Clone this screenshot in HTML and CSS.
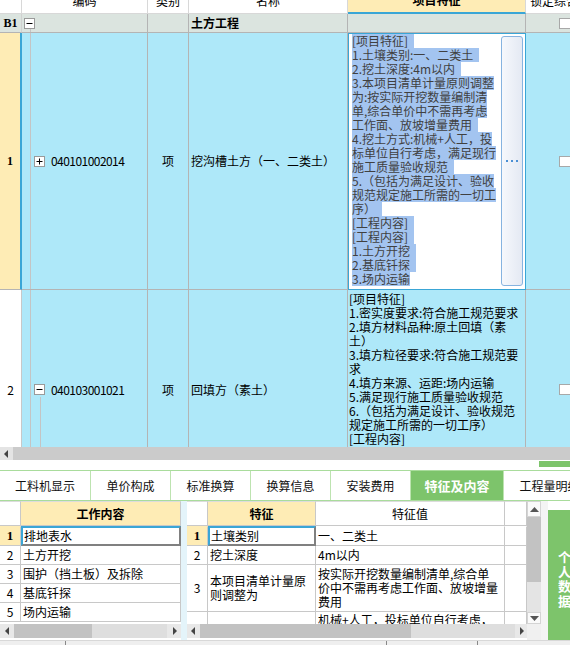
FILE: index.html
```html
<!DOCTYPE html>
<html lang="zh">
<head>
<meta charset="utf-8">
<link rel="stylesheet" href="styles.css">
</head>
<body>
<div class="top">
  <div class="tg">
    <div class="c h"></div>
    <div class="c h">编码</div>
    <div class="c h">类别</div>
    <div class="c h">名称</div>
    <div class="c h feat">项目特征</div>
    <div class="c h lock">锁定综合</div>

    <div class="c b1 num">B1</div>
    <div class="c b1 code b1code"><svg class="tbox" width="11" height="11" viewBox="0 0 11 11"><rect x="0.5" y="0.5" width="10" height="10" fill="#fff" stroke="#9a9a9a"/><path d="M2.5 5.5h6" stroke="#000"/></svg></div>
    <div class="c b1"></div>
    <div class="c b1 name bold">土方工程</div>
    <div class="c b1"></div>
    <div class="c b1 chk"><span class="box"></span></div>

    <div class="c r1 num sel">1</div>
    <div class="c r1 code r1code"><svg class="tbox" width="11" height="11" viewBox="0 0 11 11"><rect x="0.5" y="0.5" width="10" height="10" fill="#fff" stroke="#9a9a9a"/><path d="M2.5 5.5h6M5.5 2.5v6" stroke="#000"/></svg><span class="cd">040101002014</span></div>
    <div class="c r1 type">项</div>
    <div class="c r1 name">挖沟槽土方（一、二类土）</div>
    <div class="c edit">
      <div class="txt">
        <div class="ln nl">[项目特征]</div>
        <div class="ln nl">1.土壤类别:一、二类土</div>
        <div class="ln nl">2.挖土深度:4m以内</div>
        <div class="ln">3.本项目清单计量原则调整</div>
        <div class="ln">为:按实际开挖数量编制清</div>
        <div class="ln">单,综合单价中不需再考虑</div>
        <div class="ln nl">工作面、放坡增量费用</div>
        <div class="ln">4.挖土方式:机械+人工，投</div>
        <div class="ln">标单位自行考虑，满足现行</div>
        <div class="ln nl">施工质量验收规范</div>
        <div class="ln">5.（包括为满足设计、验收</div>
        <div class="ln">规范规定施工所需的一切工</div>
        <div class="ln nl">序）</div>
        <div class="ln nl">[工程内容]</div>
        <div class="ln nl">[工程内容]</div>
        <div class="ln nl">1.土方开挖</div>
        <div class="ln nl">2.基底钎探</div>
        <div class="ln">3.场内运输</div>
      </div>
      <div class="more"><svg width="12" height="3" viewBox="0 0 12 3"><rect x="0" y="0" width="2" height="2" fill="#4a8fd4"/><rect x="5" y="0" width="2" height="2" fill="#4a8fd4"/><rect x="10" y="0" width="2" height="2" fill="#4a8fd4"/></svg></div>
    </div>
    <div class="c r1 chk"><span class="box"></span></div>

    <div class="c r2 num">2</div>
    <div class="c r2 code r2code"><svg class="tbox" width="11" height="11" viewBox="0 0 11 11"><rect x="0.5" y="0.5" width="10" height="10" fill="#fff" stroke="#9a9a9a"/><path d="M2.5 5.5h6" stroke="#000"/></svg><span class="cd">040103001021</span></div>
    <div class="c r2 type">项</div>
    <div class="c r2 name">回填方（素土）</div>
    <div class="c r2 feat2">
      <div class="txt2">
        <div>[项目特征]</div>
        <div>1.密实度要求:符合施工规范要求</div>
        <div>2.填方材料品种:原土回填（素</div>
        <div>土）</div>
        <div>3.填方粒径要求:符合施工规范要</div>
        <div>求</div>
        <div>4.填方来源、运距:场内运输</div>
        <div>5.满足现行施工质量验收规范</div>
        <div>6.（包括为满足设计、验收规范</div>
        <div>规定施工所需的一切工序）</div>
        <div>[工程内容]</div>
        <div>1.土方开挖</div>
      </div>
    </div>
    <div class="c r2 chk"><span class="box"></span></div>
  </div>
</div>

<div class="hs">
  <div class="hbtn"><svg width="5" height="8" viewBox="0 0 5 8"><path d="M4 0v8L0 4z" fill="#444"/></svg></div>
</div>

<div class="gap"><i></i></div>

<div class="tabs">
  <div class="tab w91">工料机显示</div>
  <div class="tab w80">单价构成</div>
  <div class="tab w80">标准换算</div>
  <div class="tab w80">换算信息</div>
  <div class="tab w80">安装费用</div>
  <div class="tab w93 on">特征及内容</div>
  <div class="tab w92">工程量明细</div>
</div>

<div class="bot">
  <div class="panel pl">
    <div class="prow ph lgrid">
      <div class="pc"></div>
      <div class="pc yh">工作内容</div>
    </div>
    <div class="rows">
      <div class="prow lgrid first">
        <div class="pc pn yl">1</div>
        <div class="pc pt selc">排地表水</div>
      </div>
      <div class="prow lgrid">
        <div class="pc pn">2</div>
        <div class="pc pt">土方开挖</div>
      </div>
      <div class="prow lgrid">
        <div class="pc pn">3</div>
        <div class="pc pt">围护（挡土板）及拆除</div>
      </div>
      <div class="prow lgrid">
        <div class="pc pn">4</div>
        <div class="pc pt">基底钎探</div>
      </div>
      <div class="prow lgrid">
        <div class="pc pn">5</div>
        <div class="pc pt">场内运输</div>
      </div>
    </div>
    <div class="sb">
      <div class="sbtn"><svg width="5" height="8" viewBox="0 0 5 8"><path d="M4 0v8L0 4z" fill="#444"/></svg></div>
      <div class="thumb tl"></div>
      <div class="track"></div>
      <div class="sbtn"><svg width="5" height="8" viewBox="0 0 5 8"><path d="M1 0v8l4-4z" fill="#444"/></svg></div>
    </div>
  </div>

  <div class="divider"></div>

  <div class="panel pr">
    <div class="prow ph rgrid">
      <div class="pc"></div>
      <div class="pc yh">特征</div>
      <div class="pc wh">特征值</div>
      <div class="pc"></div>
    </div>
    <div class="rows">
      <div class="prow rgrid first">
        <div class="pc pn yl">1</div>
        <div class="pc pt selc">土壤类别</div>
        <div class="pc pt">一、二类土</div>
        <div class="pc"></div>
      </div>
      <div class="prow rgrid">
        <div class="pc pn">2</div>
        <div class="pc pt">挖土深度</div>
        <div class="pc pt">4m以内</div>
        <div class="pc"></div>
      </div>
      <div class="prow rgrid tall">
        <div class="pc pn">3</div>
        <div class="pc pt ml">本项目清单计量原<br>则调整为</div>
        <div class="pc pt ml">按实际开挖数量编制清单,综合单<br>价中不需再考虑工作面、放坡增量<br>费用</div>
        <div class="pc"></div>
      </div>
      <div class="prow rgrid tall">
        <div class="pc pn">4</div>
        <div class="pc pt ml">挖土方式</div>
        <div class="pc pt ml top">机械+人工，投标单位自行考虑，<br>满足现行施工质量验收规范</div>
        <div class="pc"></div>
      </div>
    </div>
    <div class="sb">
      <div class="sbtn n13"><svg width="5" height="8" viewBox="0 0 5 8"><path d="M4 0v8L0 4z" fill="#444"/></svg></div>
      <div class="thumb tr"></div>
      <div class="track"></div>
      <div class="sbtn n12"><svg width="5" height="8" viewBox="0 0 5 8"><path d="M1 0v8l4-4z" fill="#444"/></svg></div>
    </div>
  </div>

  <div class="vcol">
    <div class="vs">
      <div class="vbtn up"><svg width="9" height="5" viewBox="0 0 9 5"><path d="M0 5h9L4.5 0z" fill="#555"/></svg></div>
      <div class="vthumb"></div>
      <div class="vtrack"></div>
      <div class="vbtn dn"><svg width="9" height="5" viewBox="0 0 9 5"><path d="M0 0h9L4.5 5z" fill="#555"/></svg></div>
    </div>
  </div>

  <div class="spacer"></div>

  <div class="green"><span class="vt">个人数据</span></div>
</div>

<div class="status">
  <span class="tick t1"></span><span class="tick t2"></span><span class="tick t3"></span>
</div>
</body>
</html>
```

FILE: styles.css
```css
html, body {
  margin: 0;
  padding: 0;
}
body {
  width: 570px;
  height: 645px;
  overflow: hidden;
  background: #fff;
  color: #000;
  font-family: "Noto Sans CJK SC", "Liberation Sans", sans-serif;
  font-size: 12px;
}

/* ---------- top grid ---------- */
.top {
  height: 447px;
  overflow: hidden;
}
.tg {
  display: grid;
  grid-template-columns: 22px 126px 41px 159px 178px 80px;
  grid-template-rows: 26px 19px 257px 200px;
  margin-top: -12px;
  width: 606px;
}
.c {
  box-sizing: border-box;
  border-right: 1px solid #b4b4b4;
  border-bottom: 1px solid #b4b4b4;
  display: flex;
  align-items: center;
  overflow: hidden;
  white-space: nowrap;
  line-height: 14px;
}
.h {
  background: #fff;
  border-color: #d8d8d8;
  justify-content: center;
}
.h.feat {
  background: #feecb5;
  font-weight: bold;
  border-bottom: 2px solid #3aa6d6;
}
.h.lock {
  justify-content: flex-start;
  padding-left: 4px;
}
.b1 {
  background: #dbe4df;
}
.num {
  justify-content: center;
  font-family: "Liberation Serif", serif;
  font-weight: bold;
  font-size: 12px;
}
.b1.num {
  border-right-color: #d0d0d0;
}
.bold {
  font-weight: bold;
}
.name {
  padding-left: 2px;
}
.type {
  justify-content: center;
}
.code .tbox {
  flex: none;
  display: block;
}
.b1code {
  padding-left: 2px;
  background-image: linear-gradient(#c4c4c4, #c4c4c4);
  background-repeat: no-repeat;
  background-position: 8px 15px;
  background-size: 1px 100%;
}
.r1, .r2 {
  background-color: #aee8f9;
}
.r1.num.sel {
  background: #feecb5;
  border-right: 2px solid #3aa6d6;
}
.r2.num {
  background: #fff;
  font-family: "Noto Sans CJK SC", sans-serif;
  font-weight: normal;
  border-right-color: #c8c8c8;
}
.r1code {
  padding-left: 12px;
  background-image: linear-gradient(#c4c4c4, #c4c4c4);
  background-repeat: no-repeat;
  background-position: 8px 0;
  background-size: 1px 100%;
}
.r2code {
  padding-left: 12px;
  background-image: linear-gradient(#c4c4c4, #c4c4c4), linear-gradient(#c4c4c4, #c4c4c4);
  background-repeat: no-repeat, no-repeat;
  background-position: 8px 0, 18px 107px;
  background-size: 1px 100%, 1px 100%;
}
.cd {
  margin-left: 6px;
  letter-spacing: -0.55px;
}
.chk {
  padding-left: 33px;
  border-right: none;
}
.b1.chk {
  align-items: flex-start;
  padding-top: 4px;
}
.box {
  display: block;
  width: 14px;
  height: 11px;
  box-sizing: border-box;
  background: #fff;
  border: 1px solid #a8a8a8;
  flex: none;
}

/* editing cell */
.edit {
  background: #fff;
  border: 1px solid #3aa6d6;
  align-items: stretch;
  padding: 0 2px 0 3px;
}
.txt {
  flex: 1;
  color: #404040;
}
.ln {
  width: fit-content;
  height: 14px;
  line-height: 14px;
  background: #a3c4f0;
}
.ln.nl {
  padding-right: 6px;
}
.more {
  flex: none;
  width: 22px;
  box-sizing: border-box;
  margin: 2px 0 3px 0;
  border: 1px solid #86b3e0;
  border-radius: 3px;
  background: linear-gradient(90deg, #f6f8fc, #e4e9f3);
  display: flex;
  align-items: center;
  justify-content: center;
}
.feat2 {
  align-items: flex-start;
  padding: 2px 0 0 1px;
}
.txt2 div {
  height: 14px;
  line-height: 14px;
}

/* ---------- horizontal scroll of top grid ---------- */
.hs {
  height: 13px;
  background: #cbcbcb;
  display: flex;
}
.hbtn {
  width: 13px;
  background: #e4e4e4;
  display: flex;
  align-items: center;
  justify-content: center;
}

.gap {
  height: 10px;
  display: flex;
  justify-content: flex-end;
}
.gap i {
  display: block;
  width: 31px;
  height: 6px;
  margin-top: 1px;
  background: #7dc46b;
}

/* ---------- tabs ---------- */
.tabs {
  height: 31px;
  box-sizing: border-box;
  border-top: 1px solid #a9dc9c;
  border-bottom: 1px solid #a9dc9c;
  display: flex;
  white-space: nowrap;
  overflow: hidden;
}
.tab {
  flex: none;
  box-sizing: border-box;
  border-right: 1px solid #bde3b0;
  display: flex;
  align-items: center;
  justify-content: center;
  font-size: 12px;
  color: #111;
}
.w91 { width: 91px; }
.w80 { width: 80px; }
.w93 { width: 93px; }
.w92 { width: 92px; }
.tab.on {
  background: #7dc46b;
  color: #fff;
  font-weight: bold;
  font-size: 13px;
  border-right-color: #bde3b0;
}

/* ---------- bottom panels ---------- */
.bot {
  display: flex;
  align-items: flex-start;
  height: 139px;
  overflow: hidden;
}
.panel {
  flex: none;
  height: 139px;
}
.pl { width: 181px; }
.pr { width: 340px; }
.divider {
  flex: none;
  width: 6px;
  height: 139px;
  background: #e4f4fa;
}
.prow {
  display: grid;
  height: 19px;
}
.lgrid { grid-template-columns: 21px 160px; }
.rgrid { grid-template-columns: 21px 108px 189px 22px; }
.ph {
  height: 25px;
}
.prow.first {
  height: 20px;
}
.prow.tall {
  height: 47px;
}
.pc {
  box-sizing: border-box;
  border-right: 1px solid #c8c8c8;
  border-bottom: 1px solid #c8c8c8;
  display: flex;
  align-items: center;
  overflow: hidden;
  white-space: nowrap;
  line-height: 14px;
}
.ph .pc {
  border-top: 1px solid #dcdcdc;
  justify-content: center;
}
.yh {
  background: #feecb5;
  font-weight: bold;
}
.wh {
  background: #fff;
}
.first .pc {
  border-top: 1px solid transparent;
}
.pn {
  justify-content: center;
}
.pn.yl {
  background: #feecb5;
  font-family: "Liberation Serif", serif;
  font-weight: bold;
  font-size: 13px;
}
.pt {
  padding-left: 2px;
}
.first .pc.selc {
  border-top: 2px solid #3aa6d6;
  border-left: 2px solid #3aa6d6;
  border-right: 2px solid #808080;
  border-bottom: 2px solid #808080;
  padding-left: 1px;
}
.ml.top {
  align-items: flex-start;
  padding-top: 1px;
}
.rows {
  height: 98px;
  overflow: hidden;
}
.sb {
  height: 14px;
  background: #dedede;
  display: flex;
}
.sbtn {
  flex: none;
  width: 14px;
  display: flex;
  align-items: center;
  justify-content: center;
  background: #e8e8e8;
}
.sbtn.n13 { width: 13px; }
.sbtn.n12 { width: 12px; }
.thumb {
  flex: none;
  background: #c2c2c2;
}
.thumb.tl { width: 78px; }
.thumb.tr { width: 211px; }
.track {
  flex: 1;
}

.vcol {
  flex: none;
  width: 14px;
  height: 139px;
  background: #f0f0f0;
}
.vs {
  height: 123px;
  display: flex;
  flex-direction: column;
  background: #e4e4e4;
}
.vbtn {
  flex: none;
  display: flex;
  align-items: center;
  justify-content: center;
  background: #fafafa;
  box-sizing: border-box;
  border: 1px solid #d4d4d4;
}
.vbtn.up { height: 16px; }
.vbtn.dn { height: 12px; }
.vthumb {
  flex: none;
  height: 65px;
  background: #c2c2c2;
}
.vtrack {
  flex: 1;
}
.spacer {
  flex: none;
  width: 7px;
  height: 139px;
  background: #f4f4f4;
}
.green {
  flex: none;
  width: 40px;
  height: 130px;
  margin-top: 9px;
  background: #7dc46b;
  color: #fff;
  font-weight: bold;
  font-size: 13px;
  box-sizing: border-box;
  padding: 40px 0 0 10px;
}
.vt {
  display: block;
  width: 14px;
  line-height: 14.5px;
  word-break: break-all;
}

.status {
  height: 5px;
  box-sizing: border-box;
  border-top: 1px solid #d8d8d8;
  background: #efefef;
  display: flex;
}
.tick {
  display: block;
  width: 1px;
  height: 4px;
  background: #888;
}
.t1 { margin-left: 65px; }
.t2 { margin-left: 320px; }
.t3 { margin-left: 90px; }
```
